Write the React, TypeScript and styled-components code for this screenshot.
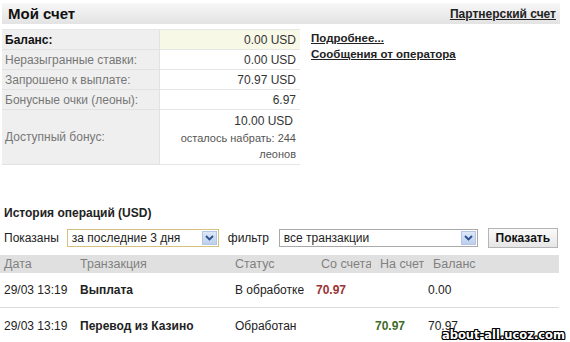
import React from "react";
import styled, { createGlobalStyle } from "styled-components";

const Global = createGlobalStyle`
  html, body {
    margin: 0;
    padding: 0;
    background: #fff;
    overflow: hidden;
  }
  body {
    font-family: "Liberation Sans", Arial, sans-serif;
    font-size: 12px;
    color: #222;
  }
`;

const summary = [
  { label: "Баланс:", value: "0.00 USD", main: true },
  { label: "Неразыгранные ставки:", value: "0.00 USD" },
  { label: "Запрошено к выплате:", value: "70.97 USD" },
  { label: "Бонусные очки (леоны):", value: "6.97" },
];

const ops = [
  { date: "29/03 13:19", name: "Выплата", status: "В обработке", out: "70.97", inc: "", bal: "0.00" },
  { date: "29/03 13:19", name: "Перевод из Казино", status: "Обработан", out: "", inc: "70.97", bal: "70.97" },
];

export default function App() {
  return (
    <Root>
      <Global />
      <TitleBar>
        <h1>Мой счет</h1>
        <TopLink>Партнерский счет</TopLink>
      </TitleBar>

      <Summary>
        <SummaryTable>
          {summary.map((r) => (
            <React.Fragment key={r.label}>
              <Label $main={r.main}>{r.label}</Label>
              <Value $main={r.main}>{r.value}</Value>
            </React.Fragment>
          ))}
          <Label $tall>Доступный бонус:</Label>
          <Value $tall>
            <span className="big">10.00 USD</span>
            <span className="small">осталось набрать: 244 леонов</span>
          </Value>
        </SummaryTable>
        <Links>
          <a>Подробнее...</a>
          <a>Сообщения от оператора</a>
        </Links>
      </Summary>

      <HistoryTitle>История операций (USD)</HistoryTitle>
      <Toolbar>
        <span>Показаны</span>
        <Select $w={152} $hl>
          <span>за последние 3 дня</span>
          <Arrow />
        </Select>
        <span className="filter">фильтр</span>
        <Select $w={199}>
          <span>все транзакции</span>
          <Arrow />
        </Select>
        <Button>Показать</Button>
      </Toolbar>

      <Ops>
        <Head>Дата</Head>
        <Head>Транзакция</Head>
        <Head>Статус</Head>
        <Head $num>Со счета</Head>
        <Head $num>На счет</Head>
        <Head $num>Баланс</Head>
        <Head />
        {ops.map((o, i) => (
          <React.Fragment key={i}>
            <Cell $first={i === 0}>{o.date}</Cell>
            <Cell $first={i === 0} $bold>{o.name}</Cell>
            <Cell $first={i === 0}>{o.status}</Cell>
            <Cell $first={i === 0} $bold $color="#993333">{o.out}</Cell>
            <Cell $first={i === 0} $bold $color="#3d6b2a">{o.inc}</Cell>
            <Cell $first={i === 0}>{o.bal}</Cell>
            <Cell $first={i === 0} />
          </React.Fragment>
        ))}
      </Ops>

      <Watermark>about-all.ucoz.com</Watermark>
    </Root>
  );
}

function Arrow() {
  return (
    <ArrowBox>
      <svg width="9" height="6" viewBox="0 0 9 6">
        <path d="M1 1 L4.5 4.5 L8 1" fill="none" stroke="#2a4f8f" strokeWidth="1.8" />
      </svg>
    </ArrowBox>
  );
}

const Root = styled.div`
  position: relative;
  width: 570px;
  height: 342px;
  overflow: hidden;
  padding-top: 3px;
  box-sizing: border-box;
`;

const TitleBar = styled.div`
  margin: 0 10px 0 2px;
  height: 21px;
  display: flex;
  align-items: center;
  justify-content: space-between;
  padding: 0 4px 0 6px;
  background: linear-gradient(#f7f7f7, #e3e3e3);
  h1 {
    margin: 0;
    font-size: 15px;
    font-weight: bold;
    color: #111;
  }
`;

const TopLink = styled.a`
  font-size: 12px;
  font-weight: bold;
  color: #222;
  text-decoration: underline;
`;

const Summary = styled.div`
  display: flex;
  align-items: flex-start;
  margin: 5px 0 0 2px;
`;

const SummaryTable = styled.div`
  display: grid;
  grid-template-columns: 158px 140px;
  border-top: 1px solid #e6e6e6;
`;

const Label = styled.div<{ $main?: boolean; $tall?: boolean }>`
  height: ${(p) => (p.$tall ? 54 : 19)}px;
  display: flex;
  align-items: center;
  padding-left: 3px;
  background: #efefef;
  border-bottom: 1px solid #e2e2e2;
  border-right: 1px solid #e2e2e2;
  color: ${(p) => (p.$main ? "#111" : "#777")};
  font-weight: ${(p) => (p.$main ? "bold" : "normal")};
  font-size: 12px;
`;

const Value = styled.div<{ $main?: boolean; $tall?: boolean }>`
  height: ${(p) => (p.$tall ? 54 : 19)}px;
  display: flex;
  flex-direction: column;
  justify-content: center;
  align-items: flex-end;
  text-align: right;
  padding-right: 4px;
  background: ${(p) => (p.$main ? "#f8f8e6" : "#fff")};
  border-bottom: 1px solid #e6e6e6;
  color: #333;
  font-size: 12px;
  .big {
    padding-right: 3px;
    line-height: 17px;
  }
  .small {
    font-size: 11px;
    line-height: 16px;
    width: 125px;
    color: #555;
  }
`;

const Links = styled.div`
  display: flex;
  flex-direction: column;
  margin: 1px 0 0 11px;
  a {
    font-size: 11.5px;
    font-weight: bold;
    color: #222;
    text-decoration: underline;
    line-height: 16px;
  }
`;

const HistoryTitle = styled.div`
  margin: 40px 0 0 4px;
  font-weight: bold;
  font-size: 12px;
  line-height: 16px;
  color: #222;
`;

const Toolbar = styled.div`
  display: flex;
  align-items: center;
  margin: 7px 0 0 4px;
  height: 20px;
  font-size: 12px;
  color: #222;
  .filter {
    margin: 0 10px 0 9px;
  }
`;

const Select = styled.div<{ $w: number; $hl?: boolean }>`
  width: ${(p) => p.$w}px;
  height: 18px;
  box-sizing: border-box;
  margin-left: ${(p) => (p.$hl ? 8 : 0)}px;
  display: flex;
  align-items: center;
  justify-content: space-between;
  padding: 0 1px 0 4px;
  border: 1px solid ${(p) => (p.$hl ? "#d6c27c" : "#a9a9a9")};
  background: #fff;
  font-size: 12px;
`;

const ArrowBox = styled.div`
  width: 15px;
  height: 14px;
  display: flex;
  align-items: center;
  justify-content: center;
  background: linear-gradient(#dde8f7, #bccfec);
  border: 1px solid #b4c6e4;
  box-sizing: border-box;
`;

const Button = styled.div`
  margin-left: 10px;
  height: 20px;
  width: 70px;
  box-sizing: border-box;
  display: flex;
  align-items: center;
  justify-content: center;
  border: 1px solid #b5b5b5;
  background: linear-gradient(#fafafa, #e6e6e6);
  font-weight: bold;
  font-size: 12px;
  color: #111;
`;

const Ops = styled.div`
  display: grid;
  grid-template-columns: 76px 155px 81px 59px 53px 60px 75px;
  margin-top: 7px;
  width: 559px;
`;

const Head = styled.div<{ $num?: boolean }>`
  height: 18px;
  display: flex;
  align-items: center;
  padding-left: ${(p) => (p.$num ? 9 : 4)}px;
  background: #e0e0e0;
  color: #808080;
  font-size: 12.5px;
  white-space: nowrap;
`;

const Cell = styled.div<{ $first?: boolean; $bold?: boolean; $color?: string }>`
  height: ${(p) => (p.$first ? 34 : 36)}px;
  display: flex;
  align-items: center;
  padding-left: 4px;
  border-bottom: ${(p) => (p.$first ? "1px solid #dcdcdc" : "none")};
  font-weight: ${(p) => (p.$bold ? "bold" : "normal")};
  color: ${(p) => p.$color || "#222"};
  font-size: 12px;
  white-space: nowrap;
`;

const Watermark = styled.div`
  position: absolute;
  right: 5px;
  bottom: 0;
  font-family: "DejaVu Sans", Verdana, sans-serif;
  font-weight: bold;
  font-size: 11.5px;
  line-height: 14px;
  color: #fff;
  text-shadow: -1px -1px 0 #000, 1px -1px 0 #000, -1px 1px 0 #000, 1px 1px 0 #000,
    0 1px 0 #000, 0 -1px 0 #000, 1px 0 0 #000, -1px 0 0 #000;
`;
